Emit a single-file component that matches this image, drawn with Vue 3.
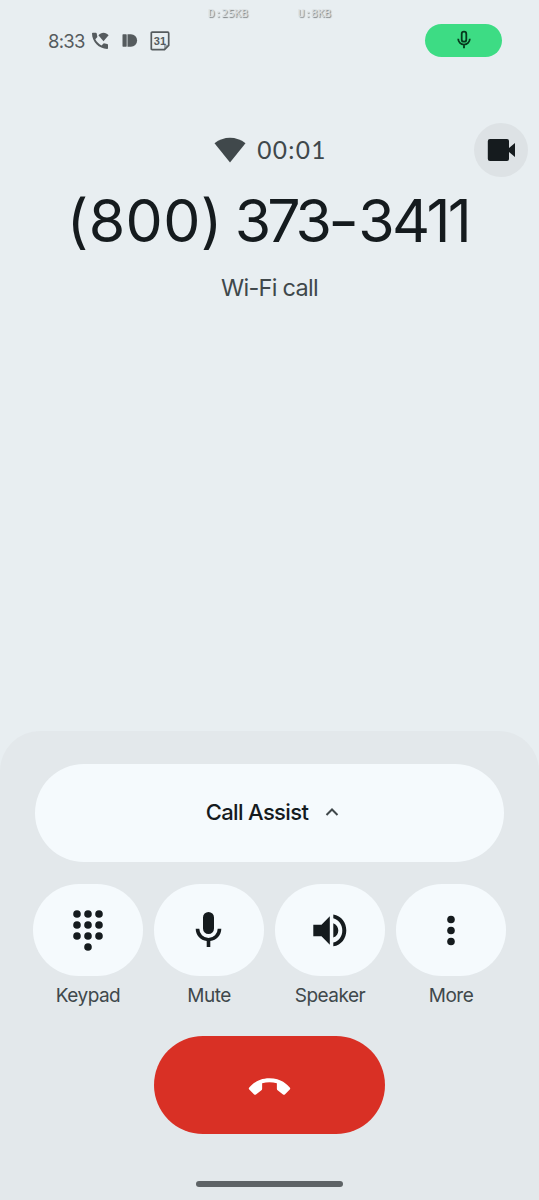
<template>
  <div class="call-screen">
    <div class="net-stats">
      <span>D:25KB</span>
      <span>U:8KB</span>
    </div>

    <header class="status-bar">
      <div class="status-left">
        <span class="clock">8:33</span>
        <svg class="icon-wifi-call" viewBox="0 0 18 18">
          <path d="M1 1.500Q1 .8 1.800.800H4.800Q5.600.800 5.700 1.500L6.400 5 4.300 7.300c1.500 2.800 3.500 4.700 6.200 6.100l2.300-2.100 3.400.700q.800.200.800.900v3.100q0 .900-.800.900C8 16.900 1 9.500 1 1.500z" />
          <path d="M7.400 3.300C10-.100 15-.100 17.600 3.300L12.500 9.200z" />
        </svg>
        <svg class="icon-id" viewBox="0 0 16 13">
          <rect x="0.500" y="0.300" width="4.200" height="12.400" rx="0.600" />
          <path d="M5.500.300H8.900a6.200 6.200 0 0 1 0 12.400H5.500z" />
        </svg>
        <svg class="icon-calendar" viewBox="0 0 20 20">
          <path d="M2.300 1.200h15.400q1 0 1 1v12.300l-4.200 4.200H2.300q-1 0-1-1V2.200q0-1 1-1z" />
          <path class="fold" d="M14 19v-5h5z" />
          <text x="9.900" y="13.800" text-anchor="middle">31</text>
        </svg>
      </div>
      <div class="mic-pill">
        <svg viewBox="0 0 16 20">
          <rect x="5.700" y="1.700" width="4.600" height="10" rx="2.300" />
          <path d="M2.200 8.800a5.800 5.800 0 0 0 11.600 0M8 14.600v3.600" />
        </svg>
      </div>
    </header>

    <section class="caller">
      <div class="timer-row">
        <svg class="icon-wifi" viewBox="0 0 32 26">
          <path d="M.500 6.200C9.500-1.200 22.500-1.200 31.500 6.200L16 25.500z" />
        </svg>
        <span class="timer">00:01</span>
        <button class="video-btn" aria-label="Video">
          <svg viewBox="0 0 28 24">
            <path d="M3 1h17a2 2 0 0 1 2 2v7l6-5v14l-6-5v7a2 2 0 0 1-2 2H3a2.200 2.200 0 0 1-2.200-2.200V3.200A2.200 2.200 0 0 1 3 1z" />
          </svg>
        </button>
      </div>
      <h1 class="number">
        <span class="area">(800)</span><span class="prefix">373</span><span class="dash">-</span><span class="line">3411</span>
      </h1>
      <p class="call-type">Wi-Fi call</p>
    </section>

    <section class="panel">
      <button class="assist">
        <span>Call Assist</span>
        <svg viewBox="0 0 14 10">
          <path d="M1.500 8L7 2.500 12.500 8" />
        </svg>
      </button>

      <div class="actions">
        <div v-for="action in actions" :key="action.id" class="action">
          <button class="action-btn" :aria-label="action.label">
            <svg viewBox="0 0 40 44">
              <template v-if="action.dots">
                <circle v-for="(dot, i) in action.dots" :key="i" :cx="dot[0]" :cy="dot[1]" r="3.800" />
              </template>
              <path v-else :d="action.path" />
            </svg>
          </button>
          <span class="action-label">{{ action.label }}</span>
        </div>
      </div>

      <button class="end-call" aria-label="End call">
        <svg viewBox="0 0 42 18">
          <path d="M21 1C32.500 1 38.500 7.300 41 10.300q.600.900-.200 1.700L36 16.700q-.900.700-1.800 0l-5.300-4q-.700-.500-.700-1.500V5.800Q21 3.800 13.800 5.800v5.400q0 1-.700 1.500l-5.300 4q-.900.700-1.800 0L1.200 12q-.800-.800-.200-1.700C3.500 7.300 9.500 1 21 1z" />
        </svg>
      </button>

      <div class="home-bar"></div>
    </section>
  </div>
</template>

<script setup>
const actions = [
  {
    id: 'keypad',
    label: 'Keypad',
    dots: [
      [9, 6], [20, 6], [31, 6],
      [9, 17], [20, 17], [31, 17],
      [9, 28], [20, 28], [31, 28],
      [20, 39]
    ]
  },
  {
    id: 'mute',
    label: 'Mute',
    path: 'M19.500 4a5.500 5.500 0 0 1 5.500 5.500v11a5.500 5.500 0 0 1-11 0v-11A5.500 5.500 0 0 1 19.500 4zM6.700 20.700h3.600a9.200 9.200 0 0 0 18.400 0h3.600c0 6.400-4.700 11.500-11 12.400V39h-3.600v-5.900c-6.300-.900-11-6-11-12.400z'
  },
  {
    id: 'speaker',
    label: 'Speaker',
    path: 'M3.300 16.700h8.200L19.800 8.200v28.600L11.500 28.300H3.300zM23.300 15.200c3.400 1.300 5 4 5 7.200s-1.600 5.900-5 7.200zM23.300 6.500C31.500 7.700 36.300 14.700 36.300 22.400S31.500 37.100 23.300 38.300v-3.700c5.500-1.300 9-6.400 9-12.200s-3.500-10.900-9-12.200z'
  },
  {
    id: 'more',
    label: 'More',
    dots: [[20, 11.5], [20, 22.5], [20, 33.5]]
  }
]
</script>

<style>
body {
  background: #e8eef1;
}
</style>

<style scoped>
.call-screen {
  display: flex;
  flex-direction: column;
  width: 539px;
  height: 1200px;
  overflow: hidden;
  background: #e8eef1;
  color: #151b1e;
  font-family: Inter, Roboto, sans-serif;
}

button {
  display: flex;
  align-items: center;
  justify-content: center;
  padding: 0;
  border: none;
  font-family: inherit;
  color: inherit;
}

svg {
  display: block;
  flex-shrink: 0;
  fill: currentColor;
}

.net-stats {
  display: flex;
  justify-content: center;
  gap: 50px;
  height: 24px;
  box-sizing: border-box;
  padding-top: 8px;
  font: 11px/12px 'DejaVu Sans Mono', monospace;
  color: #dce1e3;
  text-shadow: 1px 1px 1px #7b8082;
}

.status-bar {
  display: flex;
  justify-content: space-between;
  align-items: center;
  height: 32px;
  padding: 0 37px 0 48px;
}

.status-left {
  display: flex;
  align-items: center;
  padding-top: 1px;
  color: #555b5e;
}

.clock {
  width: 43px;
  font-size: 18.500px;
  letter-spacing: -0.700px;
}

.icon-wifi-call {
  width: 18px;
  height: 18px;
}

.icon-id {
  width: 16px;
  height: 13px;
  margin-left: 13px;
}

.icon-calendar {
  width: 20px;
  height: 20px;
  margin-left: 12px;
}

.icon-calendar path {
  fill: none;
  stroke: currentColor;
  stroke-width: 1.700;
}

.icon-calendar .fold {
  fill: currentColor;
  stroke: none;
  opacity: 0.5;
}

.icon-calendar text {
  font: bold 11px 'Liberation Sans', sans-serif;
}

.mic-pill {
  display: flex;
  align-items: center;
  justify-content: center;
  width: 77px;
  height: 33px;
  border-radius: 17px;
  background: #3ddc84;
  color: #06391c;
}

.mic-pill svg {
  width: 16px;
  height: 20px;
  margin: 0 0 1px;
  fill: none;
  stroke: currentColor;
  stroke-width: 1.800;
}

.caller {
  flex: 1;
  padding-top: 67px;
  text-align: center;
}

.timer-row {
  display: flex;
  position: relative;
  align-items: center;
  justify-content: center;
  height: 54px;
  gap: 11px;
  box-sizing: border-box;
  padding-left: 2px;
  color: #40484b;
}

.icon-wifi {
  width: 32px;
  height: 26px;
}

.timer {
  padding-bottom: 2px;
  font-family: Lato, sans-serif;
  font-size: 24.500px;
  letter-spacing: 1.300px;
}

.video-btn {
  position: absolute;
  right: 11px;
  top: 0;
  width: 54px;
  height: 54px;
  border-radius: 50%;
  background: #dde2e5;
  color: #151b1e;
}

.video-btn svg {
  width: 28px;
  height: 24px;
}

.number {
  display: flex;
  justify-content: center;
  margin: 9px 0 0;
  padding-right: 3px;
  font-size: 59px;
  line-height: 70px;
  font-weight: 400;
}

.area {
  letter-spacing: 0.400px;
}

.prefix {
  margin-left: 12px;
  letter-spacing: -4px;
}

.dash {
  margin: 0 1px 0 2px;
  transform: scaleX(1.150);
}

.line {
  letter-spacing: -2.600px;
}

.call-type {
  margin: 18px 0 0;
  font-size: 23.500px;
  line-height: 28px;
  letter-spacing: -0.700px;
  color: #40484b;
}

.panel {
  display: flex;
  flex-direction: column;
  align-items: center;
  box-sizing: border-box;
  height: 469px;
  padding-top: 33px;
  border-radius: 40px 40px 0 0;
  background: #e3e8eb;
}

.assist {
  gap: 17px;
  width: 469px;
  height: 98px;
  padding: 0 0 2px 6px;
  box-sizing: border-box;
  border-radius: 49px;
  background: #f5fafd;
  font-size: 22px;
  font-weight: 500;
}

.assist span {
  letter-spacing: -0.650px;
}

.assist svg {
  width: 14px;
  height: 10px;
  fill: none;
  stroke: #40484b;
  stroke-width: 2;
}

.actions {
  display: flex;
  gap: 11px;
  margin-top: 22px;
}

.action {
  display: flex;
  flex-direction: column;
  align-items: center;
  width: 110px;
}

.action-btn {
  width: 110px;
  height: 92px;
  border-radius: 46px;
  background: #f5fafd;
}

.action-btn svg {
  width: 40px;
  height: 44px;
}

.action-label {
  margin-top: 8px;
  font-size: 19px;
  line-height: 24px;
  letter-spacing: -0.500px;
  color: #40484b;
}

.end-call {
  width: 231px;
  height: 98px;
  margin-top: 28px;
  padding-top: 3px;
  border-radius: 49px;
  background: #d93025;
  color: #fff;
}

.end-call svg {
  width: 43px;
  height: 19px;
}

.home-bar {
  width: 147px;
  height: 6px;
  margin-top: 47px;
  border-radius: 3px;
  background: #5e6366;
}
</style>
